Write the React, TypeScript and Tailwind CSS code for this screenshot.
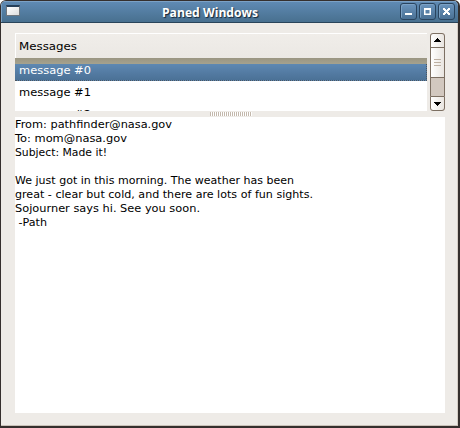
import React from "react";

const lines: { text: string; width: number }[] = [
  { text: "From: pathfinder@nasa.gov", width: 157 },
  { text: "To: mom@nasa.gov", width: 112 },
  { text: "Subject: Made it!", width: 92 },
  { text: "", width: 0 },
  { text: "We just got in this morning. The weather has been", width: 279 },
  { text: "great - clear but cold, and there are lots of fun sights.", width: 298 },
  { text: "Sojourner says hi. See you soon.", width: 185 },
  { text: " -Path", width: 32 },
];

/* Single line of text fitted to a fixed advance width. */
function Fitted({ text, width, color = "#000000", height = 14, baseline = 11 }: {
  text: string; width: number; color?: string; height?: number; baseline?: number;
}) {
  return (
    <svg className="block overflow-visible whitespace-pre" width={width} height={height}>
      {text && (
        <text x={0} y={baseline} textLength={width} lengthAdjust="spacingAndGlyphs" fill={color} xmlSpace="preserve">{text}</text>
      )}
    </svg>
  );
}

function WindowButton({ children }: { children: React.ReactNode }) {
  return (
    <div className="h-[17px] w-[17px] rounded-[3px] border border-[#29445f] bg-linear-to-b from-[#6a94bd] to-[#4a7195] shadow-[inset_1px_1px_0_#7ba1c5]">
      <svg width="15" height="15" viewBox="0 0 15 15">{children}</svg>
    </div>
  );
}

function ArrowButton({ down = false }: { down?: boolean }) {
  return (
    <div className={`flex h-[15px] w-[15px] items-center justify-center border border-[#7c6f62] bg-linear-to-r from-white to-[#e9e5e0] ${down ? "rounded-b-[3px]" : "rounded-t-[3px]"}`}>
      <svg className={down ? "rotate-180" : ""} width="7" height="5" viewBox="0 0 7 5" shapeRendering="crispEdges">
        <path d="M3 0h1v1h1v1h1v1h1v1H0V3h1V2h1V1h1z" fill="#000" />
      </svg>
    </div>
  );
}

export default function App() {
  return (
    <div className="flex h-[428px] w-[460px] flex-col overflow-hidden rounded-t-[6px] border border-r-2 border-b-2 border-[#352f2d] bg-[#eeebe7] font-['DejaVu_Sans',sans-serif] text-[11px] leading-[14px] text-black">
      <div className="flex h-[22px] shrink-0 items-start border-b border-[#29445a] bg-linear-to-b from-[#608bb5] to-[#48708f] shadow-[inset_1px_1px_0_#7ba1c5]">
        <div className="mt-1 ml-[5px] h-[11px] w-[14px] border border-t-2 border-[#70777e] border-t-[#263f59] bg-linear-to-br from-white to-[#dedede]" />
        <div className="ml-[142px] pt-[2px] font-['Open_Sans','Noto_Sans',sans-serif] text-[13px] font-bold text-white [text-shadow:1px_1px_1px_#142638]">
          <Fitted text="Paned Windows" width={96} color="#fff" height={15} baseline={14} />
        </div>
        <div className="mt-[2px] mr-[3px] ml-auto flex gap-[2px]">
          <WindowButton><path d="M4 9h7v2H4z" fill="#fff" /></WindowButton>
          <WindowButton><path d="M4 4h7v7H4zM5.5 6v3.5h4V6z" fill="#fff" fillRule="evenodd" /></WindowButton>
          <WindowButton><path d="M4 4h2v1h1v1h1V5h1V4h2v2h-1v1H9v1h1v1h1v2H9v-1H8V9H7v1H6v1H4V9h1V8h1V7H5V6H4z" fill="#fff" /></WindowButton>
        </div>
      </div>

      <div className="flex flex-1 flex-col border-r border-b border-r-[#d5cdc5] border-b-[#c9c1b8] pt-[10px] pl-[14px]">
        <div className="flex h-[78px] shrink-0 gap-[3px]">
          <div className="h-[78px] w-[412px] overflow-hidden bg-white">
            <div className="h-[25px] border-t border-l border-white bg-linear-to-b from-[#f0ede9] to-[#ebe8e4] pt-[5px] pl-[3px]">
              <Fitted text="Messages" width={58} />
            </div>
            <div className="h-[6px] bg-linear-to-b from-[#9a9582] to-[#a5a28e]" />
            <div className="h-[17px] border-r border-b border-dotted border-[#4a5560] bg-linear-to-b from-[#5e88b2] to-[#4b7196] pl-1">
              <Fitted text="message #0" width={72} color="#fff" baseline={10} />
            </div>
            <div className="h-[22px] pt-1 pl-1"><Fitted text="message #1" width={72} /></div>
            <div className="h-[22px] pt-1 pl-1"><Fitted text="message #2" width={72} /></div>
          </div>
          <div className="flex h-[78px] w-[15px] flex-col rounded-[3px] bg-[#d2c8bf]">
            <ArrowButton />
            <div className="-mt-px flex h-[31px] flex-col items-center justify-center gap-[2px] border border-[#7c6f62] bg-linear-to-r from-white to-[#e9e5e0]">
              <div className="h-px w-[7px] bg-[#bdb0a2]" />
              <div className="h-px w-[7px] bg-[#bdb0a2]" />
              <div className="h-px w-[7px] bg-[#bdb0a2]" />
            </div>
            <div className="flex-1 border-x border-[#7c6f62]" />
            <ArrowButton down />
          </div>
        </div>

        <div className="flex h-[6px] shrink-0 items-center pl-[195px]">
          <div className="h-[4px] w-[42px] bg-[repeating-linear-gradient(90deg,#c3b8ac_0_1px,#ffffff_1px_2px)]" />
        </div>

        <div className="h-[296px] w-[430px] shrink-0 bg-white">
          {lines.map((line, i) => <Fitted key={i} {...line} />)}
        </div>
      </div>
    </div>
  );
}
